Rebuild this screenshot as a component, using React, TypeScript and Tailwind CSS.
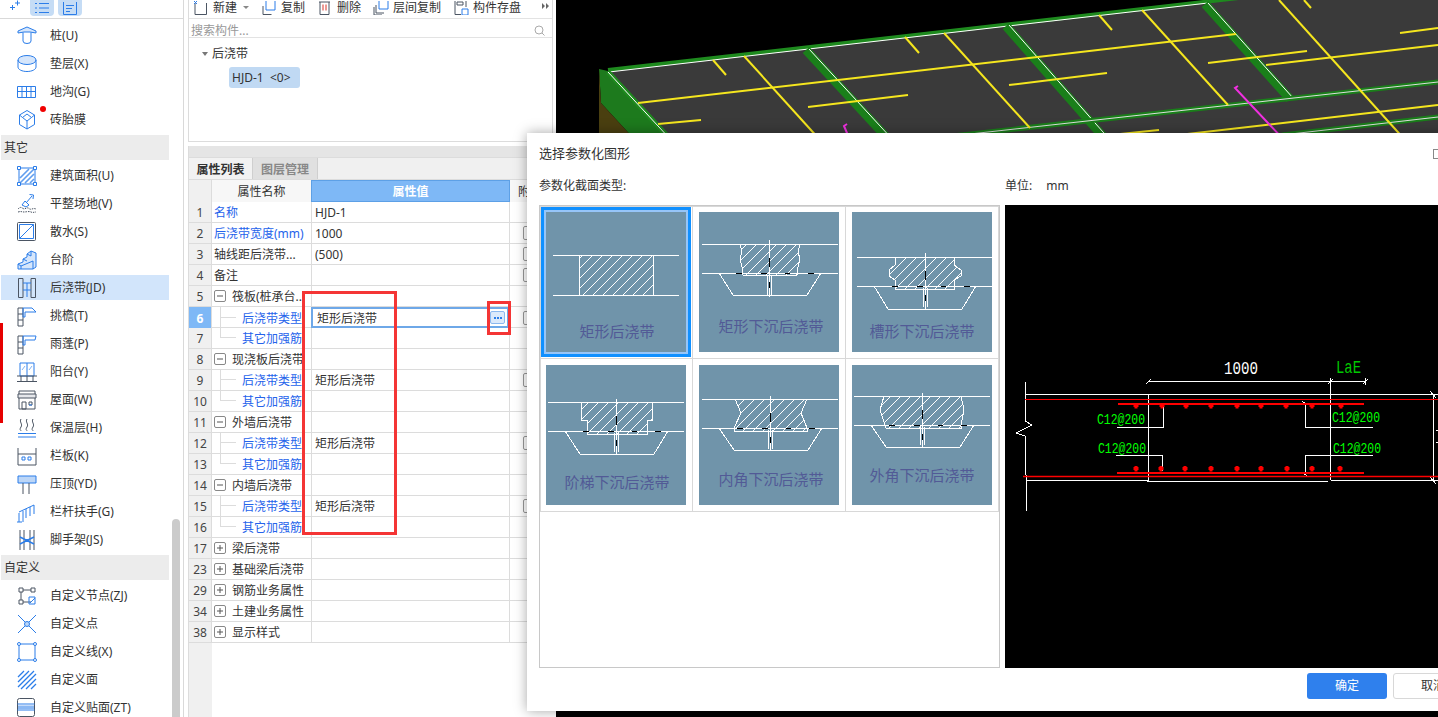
import type { ReactNode } from "react";

const B = "#2b7de9";
const G = "#4b5563";
const L = "#d6e6fb";

const icons: Record<string, ReactNode> = {
  pile: (<><path d="M2 8V6l9-4 9 4v2l-6-1H8z" stroke={B} fill={L} /><path d="M7 7.5V16a4 2.5 0 0 0 8 0V7.5" stroke={B} /></>),
  cushion: (<><ellipse cx="11" cy="7" rx="9" ry="4.5" stroke={B} fill={L} /><path d="M2 7v7c0 2.5 4 4.5 9 4.5s9-2 9-4.5V7" stroke={B} /></>),
  trench: (<path d="M1.5 5.5h18v11h-18zM1.5 10.5h18M6 5.5v11M10.5 5.5v11M15 5.5v11" stroke={B} />),
  brick: (<path d="M11 1.5l7.5 4.5v9.5L11 20l-7.5-4.5V6zM11 5l4.5 3.5L11 12 6.5 8.5zM3.5 6l3 2.5M18.5 6l-3 2.5M11 12v8" stroke={B} />),
  area: (<><path d="M3 3h16v16H3z" stroke={B} /><path d="M4 13l9-9M4 18L18 4M9 18l9-9M14 18l4-4" stroke={B} strokeWidth="1.6" opacity=".75" /><path d="M1.5 1.5h3v3h-3zM17.5 1.5h3v3h-3zM1.5 17.5h3v3h-3zM17.5 17.5h3v3h-3z" stroke={B} fill="#fff" /></>),
  site: (<><path d="M16 3l-6 7M13.5 1.5l4 .5-.5 4M6 12l3-4 4 4-3 2z" stroke={B} /><path d="M2 16c2-2 3-2 5-.5s4-2 6 0 4-1 7 .5M2 19c3-1 4 0 6 0s5-1 7 0 3 0 5 0" stroke={G} strokeDasharray="1.5 1" /></>),
  apron: (<><rect x="1.5" y="1.5" width="18" height="18" rx="1" stroke={G} /><path d="M3.5 3.5h14v14h-14zM3.5 17.5l14-14" stroke={B} /></>),
  stairs: (<><path d="M2 20v-5l5-2v-3l4-2V5l4-3 5 2v14l-3 2z" stroke={B} fill={L} /><path d="M2 15l3 2v3M7 10l4 2M11 5l4 2M15 2v5M5 17l12-5v8" stroke={B} /></>),
  pour: (<><path d="M2.5 1.5h4.5v19H2.5zM15 1.5h4.5v19H15z" stroke={G} /><path d="M7 6h8M7 13h8M11 6v14" stroke={B} /></>),
  eave: (<><path d="M2 3h5v18H2zM2 9h5M2 15h5" stroke={G} /><path d="M7 3h9l4 4H9v5H7z" stroke={B} /></>),
  canopy: (<><path d="M2 3h5v18H2zM2 9h5M2 15h5" stroke={G} /><path d="M7 3h13l-1 4H9v5H7z" stroke={B} /></>),
  balcony: (<><path d="M4 2h14v13H4zM11 2v13" stroke={B} /><path d="M6 9l3-4M13 9l3-4" stroke={B} opacity=".6" /><path d="M1 15h20M1 20.5h20M5 15v6M11 15v6M17 15v6" stroke={G} /></>),
  roof: (<><path d="M3 5V2h16v3" stroke={G} /><path d="M2 5h18v4H2z" stroke={G} fill="#e5e7eb" /><path d="M3 9v11h16V9M6 13h4v7H6zM13 13h3v3h-3z" stroke={G} /><path d="M13 16h3" stroke={B} /></>),
  insulation: (<><path d="M5 2c-2 3 2 5 0 8s0 3 0 4M11 2c-2 3 2 5 0 8s0 3 0 4M17 2c-2 3 2 5 0 8s0 3 0 4" stroke={G} /><path d="M2 16.5h18M2 20h18" stroke={B} /></>),
  panel: (<><path d="M2 3v17h18V3M2 9h18" stroke={G} /><path d="M6 12h3v3H6zM12 12h3v3h-3z" stroke={B} /></>),
  coping: (<><path d="M2 3h18v7H2z" stroke={B} fill="#bcd6f7" /><path d="M7 10v11M13 10v11" stroke={G} /></>),
  rail: (<path d="M3 11l15-7M3 21v-9M7 21V10M10 17V8M14 15V6M18 13V4M1 21h5" stroke={B} />),
  scaffold: (<><path d="M4 1v20M8 1v20M14 1v20M18 1v20" stroke={G} /><path d="M4 8l14 7M4 15l14-7" stroke={B} strokeWidth="1.5" /><path d="M9 10h4v3H9z" fill={B} /></>),
  node: (<><path d="M3 3h4v4H3zM15 3h4v4h-4zM3 15h4v4H3z" stroke={G} /><path d="M7 5h8M5 7v8M7 17h8" stroke={G} /><path d="M13 12h6v7h-6zM14 18l5-5" stroke={B} /></>),
  point: (<><path d="M2 2l18 18M20 2L2 20" stroke={B} /><circle cx="11" cy="11" r="2.5" stroke={B} fill="#bcd6f7" /></>),
  line: (<><path d="M3 3h16v16H3z" stroke={B} /><circle cx="3" cy="3" r="1.5" stroke={B} fill="#fff" /><circle cx="19" cy="3" r="1.5" stroke={B} fill="#fff" /><circle cx="3" cy="19" r="1.5" stroke={B} fill="#fff" /><circle cx="19" cy="19" r="1.5" stroke={B} fill="#fff" /></>),
  face: (<path d="M2 8l6-6M2 13l11-11M2 18L18 2M5 20L20 5M10 20l10-10M15 20l5-5" stroke={B} strokeWidth="1.3" />),
  veneer: (<><rect x="1.5" y="1.5" width="17" height="18" rx="2" stroke={G} /><path d="M1.5 7h17M1.5 13h17" stroke={B} /><path d="M2 8.5h16v3.5H2z" fill={B} opacity=".55" /></>),
};

const sideItems: { label: string; icon?: string; dot?: boolean; active?: boolean }[] = [
  { label: "桩(U)", icon: "pile" },
  { label: "垫层(X)", icon: "cushion" },
  { label: "地沟(G)", icon: "trench" },
  { label: "砖胎膜", icon: "brick", dot: true },
  { label: "其它" },
  { label: "建筑面积(U)", icon: "area" },
  { label: "平整场地(V)", icon: "site" },
  { label: "散水(S)", icon: "apron" },
  { label: "台阶", icon: "stairs" },
  { label: "后浇带(JD)", icon: "pour", active: true },
  { label: "挑檐(T)", icon: "eave" },
  { label: "雨蓬(P)", icon: "canopy" },
  { label: "阳台(Y)", icon: "balcony" },
  { label: "屋面(W)", icon: "roof" },
  { label: "保温层(H)", icon: "insulation" },
  { label: "栏板(K)", icon: "panel" },
  { label: "压顶(YD)", icon: "coping" },
  { label: "栏杆扶手(G)", icon: "rail" },
  { label: "脚手架(JS)", icon: "scaffold" },
  { label: "自定义" },
  { label: "自定义节点(ZJ)", icon: "node" },
  { label: "自定义点", icon: "point" },
  { label: "自定义线(X)", icon: "line" },
  { label: "自定义面", icon: "face" },
  { label: "自定义贴面(ZT)", icon: "veneer" },
];

function Sidebar() {
  return (
    <aside className="relative h-full w-[184px] shrink-0 border-r border-[#d9d9d9] bg-white">
      <div className="flex h-[19px] items-start border-b border-[#d9d9d9] pl-[8px]">
        <svg width="12" height="12" viewBox="0 0 12 12" fill="none" stroke={B}>
          <path d="M2 7.5h5M4.5 5v5M7 3h5M9.5 0.5v5" />
        </svg>
        <div className="ml-[10px] flex h-[16px] w-[24px] items-center justify-center rounded-b-[4px] bg-[#c5dcf5]">
          <svg width="16" height="12" viewBox="0 0 16 12" fill="none" stroke={B}>
            <path d="M1 1.5h2M5 1.5h10M1 6h2M5 6h10M1 10.5h2M5 10.5h10" />
          </svg>
        </div>
        <div className="ml-[4px] flex h-[16px] w-[24px] items-center justify-center rounded-b-[4px] bg-[#c5dcf5]">
          <svg width="16" height="13" viewBox="0 0 16 13" fill="none" stroke={B}>
            <path d="M1.5 0v12.5h13V0M4 3.5h8M4 6.5h6M4 9.5h4" />
          </svg>
        </div>
      </div>
      <div className="pl-px pt-[4px]">
        {sideItems.map((item) =>
          item.icon ? (
            <div
              key={item.label}
              className={`relative mb-[3px] flex h-[25px] w-[168px] items-center pl-[15px] ${item.active ? "bg-[#d2e5fb]" : ""}`}
            >
              <svg width="22" height="22" viewBox="0 0 22 22" fill="none" className="shrink-0">
                {icons[item.icon]}
              </svg>
              <span className="ml-[12px] whitespace-nowrap text-[12px] text-[#333]">{item.label}</span>
              {item.dot && <span className="absolute left-[39px] top-[-1px] h-[6px] w-[6px] rounded-full bg-[#f00000]" />}
            </div>
          ) : (
            <div key={item.label} className="mb-[3px] flex h-[25px] w-[168px] items-center bg-[#ececec] pl-[3px] text-[12px] text-[#333]">
              {item.label}
            </div>
          ),
        )}
      </div>
      <div className="absolute left-[172px] top-[519px] h-[198px] w-[8px] rounded-t-[4px] bg-[#cbcbcb]" />
      <div className="absolute left-0 top-[323px] h-[100px] w-[3px] bg-[#e60000]" />
    </aside>
  );
}

const toolIcons: Record<string, ReactNode> = {
  new: (<><path d="M2 2v11.5h11.5V2" stroke={G} /><path d="M1 0l3 3M4 0L1 3" stroke={B} /></>),
  copy: (<><path d="M2 5v8.5h8.5" stroke={G} /><path d="M5 0v9h9V0" stroke={B} /></>),
  del: (<><path d="M2 1h11M3 1v12.5h9V1" stroke={G} /><path d="M6 3.5v6M9 3.5v6" stroke="#d9342b" /></>),
  layer: (<><path d="M1 6v8h8M3 4v8h8" stroke={G} /><path d="M6 0v8h9V0" stroke={B} /></>),
  save: (<><path d="M2 0v13.5h6M13 0v6" stroke={G} /><path d="M9 8h6v6H9z" stroke={B} /><path d="M4 1h6v3H4z" stroke={G} /></>),
};

function Toolbar() {
  const items = [
    { icon: "new", label: "新建" },
    { icon: "copy", label: "复制" },
    { icon: "del", label: "删除" },
    { icon: "layer", label: "层间复制" },
    { icon: "save", label: "构件存盘" },
  ];
  return (
    <div className="flex h-[19px] items-start gap-[12px] border-b border-[#e3e3e3] pl-[4px]">
      {items.map((t, i) => (
        <div key={t.label} className="flex h-[14px] items-center gap-[4px] pt-px text-[12px] leading-none text-[#333]">
          <svg width="16" height="14" viewBox="0 0 16 14" fill="none" className="shrink-0">
            {toolIcons[t.icon]}
          </svg>
          <span className="whitespace-nowrap">{t.label}</span>
          {i === 0 && <span className="ml-[2px] h-0 w-0 border-x-[3px] border-t-[3px] border-x-transparent border-t-[#888]" />}
        </div>
      ))}
      <svg width="8" height="8" viewBox="0 0 8 8" fill="#666" className="ml-[9px] mt-[2px]">
        <path d="M0 1l3 3-3 3zM4 1l3 3-3 3z" />
      </svg>
    </div>
  );
}

type Row = {
  n: number;
  name: string;
  kind?: "blue" | "group" | "plus" | "child";
  value?: string;
  check?: boolean;
  last?: boolean;
  active?: boolean;
};

const rows: Row[] = [
  { n: 1, name: "名称", kind: "blue", value: "HJD-1" },
  { n: 2, name: "后浇带宽度(mm)", kind: "blue", value: "1000", check: true },
  { n: 3, name: "轴线距后浇带...", value: "(500)", check: true },
  { n: 4, name: "备注", check: true },
  { n: 5, name: "筏板(桩承台...", kind: "group" },
  { n: 6, name: "后浇带类型", kind: "child", value: "矩形后浇带", check: true, active: true },
  { n: 7, name: "其它加强筋", kind: "child", last: true },
  { n: 8, name: "现浇板后浇带", kind: "group" },
  { n: 9, name: "后浇带类型", kind: "child", value: "矩形后浇带", check: true },
  { n: 10, name: "其它加强筋", kind: "child", last: true },
  { n: 11, name: "外墙后浇带", kind: "group" },
  { n: 12, name: "后浇带类型", kind: "child", value: "矩形后浇带", check: true },
  { n: 13, name: "其它加强筋", kind: "child", last: true },
  { n: 14, name: "内墙后浇带", kind: "group" },
  { n: 15, name: "后浇带类型", kind: "child", value: "矩形后浇带", check: true },
  { n: 16, name: "其它加强筋", kind: "child", last: true },
  { n: 17, name: "梁后浇带", kind: "plus" },
  { n: 23, name: "基础梁后浇带", kind: "plus" },
  { n: 29, name: "钢筋业务属性", kind: "plus" },
  { n: 34, name: "土建业务属性", kind: "plus" },
  { n: 38, name: "显示样式", kind: "plus" },
];

function NameCell({ row }: { row: Row }) {
  if (row.kind === "child") {
    return (
      <div className="flex h-full items-center overflow-hidden">
        <div className="ml-[8px] flex h-full w-[16px] shrink-0 flex-col">
          <div className="h-1/2 border-b border-l border-[#dcdcdc]" />
          {!row.last && <div className="h-1/2 border-l border-[#dcdcdc]" />}
        </div>
        <span className="ml-[6px] whitespace-nowrap pt-[2px] text-[#2563eb]">{row.name}</span>
      </div>
    );
  }
  if (row.kind === "group" || row.kind === "plus") {
    return (
      <div className="flex h-full items-center overflow-hidden pl-[2px]">
        <span className="flex h-[12px] w-[12px] shrink-0 items-center justify-center rounded-[2px] border border-[#888] bg-white">
          <svg width="8" height="8" viewBox="0 0 8 8" stroke="#555">
            <path d={row.kind === "group" ? "M1 4h6" : "M1 4h6M4 1v6"} />
          </svg>
        </span>
        <span className="ml-[6px] whitespace-nowrap pt-[2px] text-[#333]">{row.name}</span>
      </div>
    );
  }
  return (
    <div className={`flex h-full items-center overflow-hidden whitespace-nowrap pl-[2px] pt-[2px] ${row.kind === "blue" ? "text-[#2563eb]" : "text-[#333]"}`}>
      {row.name}
    </div>
  );
}

function PropertyTable() {
  return (
    <div className="flex flex-1 flex-col bg-white">
      <div className="grid h-[22px] grid-cols-[23px_100px_198px_44px] border-b border-[#dcdcdc] text-[12px]">
        <div className="border-r border-[#dcdcdc] bg-[#f0f0f0]" />
        <div className="flex items-center justify-center border-r border-[#dcdcdc] bg-[#f7f7f7] pt-[2px] text-[#333]">属性名称</div>
        <div className="-ml-px flex items-center justify-center border border-[#5da0e6] bg-[#7eb8f6] pt-[2px] font-bold text-white">属性值</div>
        <div className="flex items-center overflow-hidden whitespace-nowrap bg-[#f7f7f7] pl-[8px] pt-[2px] text-[#333]">附加</div>
      </div>
      {rows.map((row) => (
        <div key={row.n} className="grid h-[21px] grid-cols-[23px_100px_198px_44px] border-b border-[#dcdcdc] text-[12px]">
          <div className={`flex items-center justify-center border-r border-[#dcdcdc] pt-[2px] ${row.active ? "bg-[#7eb8f6] font-bold text-white" : "bg-[#f0f0f0] text-[#444]"}`}>
            {row.n}
          </div>
          <div className="border-r border-[#dcdcdc]">
            <NameCell row={row} />
          </div>
          <div className="border-r border-[#dcdcdc]">
            {row.active ? (
              <div className="-ml-px flex h-[21px] items-center justify-between border-2 border-[#6ea8e8] bg-white pl-[4px] pr-[2px] text-[#333]">
                <span className="pt-[2px]">矩形后浇带</span>
                <span className="flex h-[13px] w-[15px] items-center justify-center gap-[1px] rounded-[2px] border border-[#8bb8ef] bg-[#dbe9fb]">
                  <i className="h-[2px] w-[2px] bg-[#2b7de9]" />
                  <i className="h-[2px] w-[2px] bg-[#2b7de9]" />
                  <i className="h-[2px] w-[2px] bg-[#2b7de9]" />
                </span>
              </div>
            ) : (
              <div className="flex h-full items-center pl-[3px] pt-[2px] text-[#333]">{row.value}</div>
            )}
          </div>
          <div className="flex items-center pl-[13px]">
            {row.check && <span className="h-[14px] w-[12px] rounded-[2px] border border-[#999]" />}
          </div>
        </div>
      ))}
      <div className="flex-1">
        <div className="h-full w-[23px] bg-[#f0f0f0]" />
      </div>
    </div>
  );
}

function MiddlePanel() {
  return (
    <section className="relative flex h-full w-[372px] shrink-0 flex-col bg-white pl-[4px] pr-[3px]">
      <div className="flex h-[142px] flex-col border border-t-0 border-[#dcdcdc]">
        <Toolbar />
        <div className="flex h-[19px] items-center justify-between border-b border-[#e3e3e3] pl-[2px] pr-[7px] pt-[5px] text-[12px] text-[#999]">
          搜索构件...
          <svg width="11" height="11" viewBox="0 0 11 11" fill="none" stroke="#aaa">
            <circle cx="5" cy="5" r="4" />
            <path d="M8 8l2.5 2.5" />
          </svg>
        </div>
        <div className="flex-1 pl-[13px] pt-[7px] text-[12px] text-[#333]">
          <div className="flex h-[18px] items-center">
            <span className="h-0 w-0 border-x-[3px] border-t-[4px] border-x-transparent border-t-[#777]" />
            <span className="ml-[4px]">后浇带</span>
          </div>
          <div className="ml-[27px] mt-[4px] flex h-[21px] w-[71px] items-center whitespace-pre rounded-[3px] bg-[#c0d9f3] pl-[3px] pt-px">HJD-1  {"<0>"}</div>
        </div>
      </div>
      <div className="h-[4px]" />
      <div className="h-[11px] border-x border-[#dcdcdc] bg-[#e5e5e5]" />
      <div className="flex h-[23px] border border-[#dcdcdc] bg-[#f0f0f0] text-[12px]">
        <div className="flex w-[64px] items-center justify-center border-r border-[#cfcfcf] bg-[#f2f2f2] pt-[2px] font-bold text-[#333]">属性列表</div>
        <div className="flex w-[65px] items-center justify-center border-r border-[#cfcfcf] bg-[#e0e0e0] pt-[2px] font-bold text-[#888]">图层管理</div>
      </div>
      <div className="flex flex-1 flex-col border-l border-[#dcdcdc]">
        <PropertyTable />
      </div>
      <div className="absolute left-[118px] top-[291px] h-[244px] w-[95px] border-[3px] border-[#f43535]" />
      <div className="absolute left-[303px] top-[301px] h-[34px] w-[24px] border-[3px] border-[#f43535]" />
    </section>
  );
}

function ModelCanvas() {
  const yellow = [
    "M82 103L680 34", "M102 124L145 120", "M157 60L170 75", "M188 56L264 140", "M349 37L363 53",
    "M388 33L474 128", "M252 107L352 95", "M453 85L551 73", "M543 15L556 30", "M586 10L672 105",
    "M652 63L751 51", "M710 65L882 45", "M723 0L849 140", "M748 0L755 8", "M844 33L882 28",
    "M579 140L882 105", "M506 140L603 130",
  ];
  const beams = ["M253 49L337 140", "M453 25L554 140", "M652 3L737 98"];
  const cross = ["M360 140L882 82", "M726 135L882 117"];
  return (
    <div className="h-full flex-1 overflow-hidden bg-black">
      <svg width="882" height="717" viewBox="0 0 882 717" fill="none">
        <path d="M43 69L52 71L115 140L79 140L45 103Z" fill="#1d7a1d" />
        <path d="M43 69L45 103L79 140L43 140Z" fill="#4a3f10" />
        <path d="M52 71L700 -4L882 -4L882 140L115 140Z" fill="#3a3a3a" />
        <path d="M52 70L700 -4" stroke="#1e8a1e" strokeWidth="4" />
        <path d="M53 72L652 3" stroke="#fff" />
        <path d="M52 72L115 140" stroke="#1e8a1e" strokeWidth="5" />
        <path d="M52 72L115 140" stroke="#fff" />
        {beams.map((d) => (
          <g key={d}>
            <path d={d} stroke="#1a7f1a" strokeWidth="9" transform="translate(-3 1)" />
            <path d={d} stroke="#fff" />
          </g>
        ))}
        {cross.map((d) => (
          <g key={d}>
            <path d={d} stroke="#1a7f1a" strokeWidth="5" />
            <path d={d} stroke="#ddd" />
          </g>
        ))}
        {yellow.map((d) => (
          <path key={d} d={d} stroke="#f5e61e" strokeWidth="2" />
        ))}
        <path d="M682 86L679 88L728 140" stroke="#f030e0" strokeWidth="2" />
        <path d="M291 124L288 126L294 140" stroke="#f030e0" strokeWidth="2" />
      </svg>
    </div>
  );
}

type Section = {
  label: string;
  top: number;
  mid: number;
  x1: number;
  x2: number;
  poly: string;
  trough?: string;
  cx: number;
  cy1: number;
  cy2: number;
  tx: number;
  ty: number;
};

const sections: Section[] = [
  { label: "矩形后浇带", top: 43, mid: 83, x1: 7, x2: 133, poly: "33,43 107,43 107,83 33,83", cx: 70, cy1: 0, cy2: 0, tx: 71, ty: 120 },
  { label: "矩形下沉后浇带", top: 32, mid: 61, x1: 3, x2: 139, poly: "41,32 101,32 99,40 101,47 99,55 98,63 44,63 43,55 41,47 43,40", trough: "20,61 34,83 108,83 122,61", cx: 70, cy1: 28, cy2: 85, tx: 72, ty: 115 },
  { label: "槽形下沉后浇带", top: 45, mid: 74, x1: 5, x2: 140, poly: "43,45 102,45 102,53 109,58 109,64 102,68 102,77 43,77 43,68 37,64 37,58 43,53", trough: "22,74 36,97 110,97 124,74", cx: 73, cy1: 41, cy2: 97, tx: 70, ty: 120 },
  { label: "阶梯下沉后浇带", top: 37, mid: 66, x1: 2, x2: 138, poly: "35,37 106,37 106,55 101,55 101,69 41,69 41,55 35,55", trough: "19,66 34,89 108,89 122,66", cx: 70, cy1: 34, cy2: 89, tx: 71, ty: 118 },
  { label: "内角下沉后浇带", top: 34, mid: 63, x1: 3, x2: 139, poly: "36,34 108,34 102,48 108,63 108,66 35,66 35,63 42,48", trough: "20,63 35,85 109,85 123,63", cx: 71, cy1: 31, cy2: 86, tx: 72, ty: 115 },
  { label: "外角下沉后浇带", top: 31, mid: 60, x1: 2, x2: 138, poly: "32,31 109,31 112,45 109,60 109,63 34,63 28,45", trough: "19,60 34,82 108,82 122,60", cx: 70, cy1: 28, cy2: 82, tx: 70, ty: 111 },
];

function SectionThumb({ s, i }: { s: Section; i: number }) {
  return (
    <svg width="140" height="140" viewBox="0 0 140 140" fill="none" className="block bg-[#7094aa]">
      <defs>
        <pattern id={`hatch-${i}`} width="10" height="10" patternUnits="userSpaceOnUse">
          <path d="M-1 11L11 -1M-6 6L6 -6M4 16L16 4" stroke="#fff" shapeRendering="crispEdges" />
        </pattern>
      </defs>
      <polygon points={s.poly} fill={`url(#hatch-${i})`} stroke="#fff" shapeRendering="crispEdges" />
      <g stroke="#fff" shapeRendering="crispEdges">
        <path d={`M${s.x1} ${s.top}H${s.x2}M${s.x1} ${s.mid}H${s.x2}`} />
        {s.trough && <polyline points={s.trough} />}
        {s.trough && <path d={`M${s.cx} ${s.cy1}V${s.cy2}M${s.cx - 2} ${s.mid + 2}V${s.cy2 - 2}M${s.cx + 2} ${s.mid + 2}V${s.cy2 - 2}`} />}
      </g>
      {s.trough && (
        <g stroke="#000" shapeRendering="crispEdges">
          <path d={`M${s.cx - 33} ${s.mid}h6M${s.cx - 8} ${s.mid}h6M${s.cx + 16} ${s.mid}h5M${s.cx + 39} ${s.mid}h6`} />
          <path d={`M${s.cx} ${s.mid - 15}v9M${s.cx} ${s.mid + 9}v6`} />
        </g>
      )}
      <text x={s.tx} y={s.ty + 5} textAnchor="middle" fontSize="15" fill="#525a96">
        {s.label}
      </text>
    </svg>
  );
}

function SectionGrid() {
  return (
    <div className="h-[463px] w-[461px] shrink-0 border border-[#c8c8c8] bg-white">
      <div className="grid grid-cols-[152px_153px_153px] grid-rows-[152px_153px] border-l border-t border-[#d8d8d8]">
        {sections.map((s, i) => (
          <div key={s.label} className={`border-b border-r border-[#d8d8d8] ${i % 3 === 0 ? "pl-[5px]" : "pl-[6px]"} ${i < 3 ? "pt-[5px]" : "pt-[6px]"}`}>
            <div className={`w-[140px] ${i === 0 ? "shadow-[0_0_0_2px_#96c5f8,0_0_0_5px_#1090ff]" : ""}`}>
              <SectionThumb s={s} i={i} />
            </div>
          </div>
        ))}
      </div>
    </div>
  );
}

function PreviewDrawing() {
  const top = [131, 157, 181, 206, 232, 256, 281, 307, 336];
  const bottom = [131, 156, 180, 206, 232, 256, 282, 307, 335];
  const white = [
    "M20 177V216L27 220L11 228L20 231V270", "M21 270V306", "M20 189H433", "M143 189V276", "M325 173V275",
    "M143 176H360", "M360 173V180", "M141 179L146 174", "M323 179L328 174", "M358 179L363 174",
    "M21 275H143", "M142 276H323", "M326 275H433", "M428 189V275", "M425 186L431 193", "M425 272L431 279",
    "M112 222H158V201", "M111 250H157V266", "M368 222H300V200", "M297 196L302 200", "M368 250H300V268", "M297 267L302 271",
    "M431 225H433V237H431",
  ];
  return (
    <div className="h-[463px] w-[433px] shrink-0 bg-black">
      <svg width="433" height="463" viewBox="0 0 433 463" fill="none">
        {white.map((d) => (
          <path key={d} d={d} stroke="#fff" shapeRendering="crispEdges" />
        ))}
        <path d="M20 194.5H433" stroke="#f00" shapeRendering="crispEdges" />
        <path d="M113 199H359M112 268H359" stroke="#f00" strokeWidth="2" shapeRendering="crispEdges" />
        <path d="M18 271.5H433" stroke="#f00" strokeWidth="1.5" />
        {top.map((x) => (
          <path key={x} d={`M${x - 1.5} ${198}h3v1h1v3h-1v1.5h-3v-1.5h-1v-3h1z`} fill="#f00" />
        ))}
        {bottom.map((x) => (
          <path key={x} d={`M${x - 1.5} ${261}h3v1h1v3h-1v1.5h-3v-1.5h-1v-3h1z`} fill="#f00" />
        ))}
        <g fontFamily="'Liberation Mono', monospace">
          <text x="219" y="169" textLength="34" lengthAdjust="spacingAndGlyphs" fontSize="19" fill="#fff">1000</text>
          <text x="331" y="168" textLength="25" lengthAdjust="spacingAndGlyphs" fontSize="19" fill="#00c800">LaE</text>
          <g fontSize="15" fill="#00ff00">
            <text x="92" y="219" textLength="48" lengthAdjust="spacingAndGlyphs">C12@200</text>
            <text x="93" y="248" textLength="48" lengthAdjust="spacingAndGlyphs">C12@200</text>
            <text x="327" y="217" textLength="48" lengthAdjust="spacingAndGlyphs">C12@200</text>
            <text x="328" y="248" textLength="48" lengthAdjust="spacingAndGlyphs">C12@200</text>
          </g>
        </g>
      </svg>
    </div>
  );
}

function ParamDialog() {
  return (
    <div className="absolute left-[527px] top-[133px] h-[578px] w-[960px] bg-white pl-[12px] text-[12px] text-[#333] shadow-[0_0_12px_rgba(0,0,0,0.35)]">
      <div className="flex h-[41px] items-center">
        <span className="w-[894px] text-[13px] leading-none">选择参数化图形</span>
        <span className="h-[10px] w-[10px] border border-[#888]" />
      </div>
      <div className="flex h-[24px] items-center leading-none">
        <span className="w-[466px]">参数化截面类型:</span>
        <span>单位:</span>
        <span className="ml-[14px]">mm</span>
      </div>
      <div className="mt-[7px] flex gap-[5px]">
        <SectionGrid />
        <PreviewDrawing />
      </div>
      <div className="mt-[5px] flex gap-[6px] pl-[768px]">
        <button className="h-[26px] w-[80px] rounded-[3px] bg-[#2f80ed] text-white">确定</button>
        <button className="h-[26px] w-[80px] rounded-[3px] border border-[#d8d8d8] bg-white text-[#333]">取消</button>
      </div>
    </div>
  );
}

export default function App() {
  return (
    <div className="relative flex h-[717px] w-[1438px] overflow-hidden bg-white font-['Noto_Sans','Noto_Sans_CJK_SC',sans-serif]">
      <Sidebar />
      <MiddlePanel />
      <ModelCanvas />
      <ParamDialog />
    </div>
  );
}
